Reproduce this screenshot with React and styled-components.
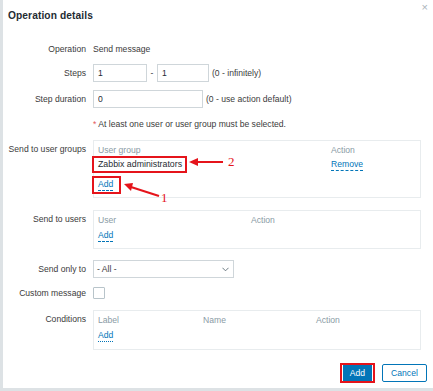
import React from 'react';
import styled, { createGlobalStyle } from 'styled-components';

const Global = createGlobalStyle`
	html, body {
		margin: 0;
		padding: 0;
		background: #ffffff;
	}
	body {
		font-family: 'Liberation Sans', Arial, sans-serif;
	}
`;

export default function App() {
	return (
		<>
			<Global />
			<Dialog>
				<Header>
					<Title>Operation details</Title>
					<Close>×</Close>
				</Header>
				<Form>
					<Row $mt={10}>
						<Label>Operation</Label>
						<Value>Send message</Value>
					</Row>
					<Row $mt={6}>
						<Label>Steps</Label>
						<Value>
							<Input $w={54} defaultValue="1" />
							<Dash>-</Dash>
							<Input $w={52} defaultValue="1" />
							<Hint>(0 - infinitely)</Hint>
						</Value>
					</Row>
					<Row $mt={8}>
						<Label>Step duration</Label>
						<Value>
							<Input $w={110} defaultValue="0" />
							<Hint>(0 - use action default)</Hint>
						</Value>
					</Row>
					<Row $mt={8}>
						<Label />
						<Warning>
							<Star>*</Star> At least one user or user group must be selected.
						</Warning>
					</Row>
					<Row $mt={8}>
						<Label $top>Send to user groups</Label>
						<TableBox $h={58}>
							<TableRow $cols="233px 1fr">
								<Th>User group</Th>
								<Th>Action</Th>
							</TableRow>
							<TableRow $cols="233px 1fr" $h={17}>
								<div>
									<Marked>Zabbix administrators</Marked>
								</div>
								<Link>Remove</Link>
							</TableRow>
							<AddRow>
								<MarkedAdd>
									<Link>Add</Link>
								</MarkedAdd>
							</AddRow>
						</TableBox>
					</Row>
					<Row $mt={12}>
						<Label $top>Send to users</Label>
						<TableBox $h={39}>
							<TableRow $cols="153px 1fr">
								<Th>User</Th>
								<Th>Action</Th>
							</TableRow>
							<PlainAdd>
								<Link>Add</Link>
							</PlainAdd>
						</TableBox>
					</Row>
					<Row $mt={11}>
						<Label>Send only to</Label>
						<Select>
							<span>- All -</span>
							<Chevron viewBox="0 0 8 5">
								<path d="M0.5 0.5 L4 4 L7.5 0.5" />
							</Chevron>
						</Select>
					</Row>
					<Row $mt={9}>
						<Label>Custom message</Label>
						<Checkbox />
					</Row>
					<Row $mt={11}>
						<Label $top>Conditions</Label>
						<TableBox $h={40}>
							<TableRow $cols="105px 113px 1fr">
								<Th>Label</Th>
								<Th>Name</Th>
								<Th>Action</Th>
							</TableRow>
							<PlainAdd>
								<Link $dotted>Add</Link>
							</PlainAdd>
						</TableBox>
					</Row>
				</Form>
				<Footer>
					<MarkedButton>
						<PrimaryButton>Add</PrimaryButton>
					</MarkedButton>
					<SecondaryButton>Cancel</SecondaryButton>
				</Footer>
				<Arrows width="433" height="391" viewBox="0 0 433 391">
					<g stroke="#e5141b" strokeWidth="2" fill="#e5141b">
						<line x1="223" y1="162" x2="196" y2="162" />
						<polygon points="189,162 198,158 198,166" stroke="none" />
						<line x1="159" y1="196" x2="131" y2="187" />
						<polygon points="124,184 133,183 131,191" stroke="none" />
					</g>
					<AnnotationNumber x="228" y="166">2</AnnotationNumber>
					<AnnotationNumber x="161" y="202">1</AnnotationNumber>
				</Arrows>
			</Dialog>
		</>
	);
}

const Dialog = styled.div`
	position: relative;
	width: 433px;
	height: 391px;
	box-sizing: border-box;
	border-left: 3px solid #dde2e5;
	border-bottom: 3px solid #dde2e5;
	background: #ffffff;
	color: #1f2c33;
	font-size: 8.6px;
	overflow: hidden;
`;

const Header = styled.div`
	position: relative;
	height: 30px;
	display: flex;
	align-items: center;
	padding-left: 5px;
`;

const Title = styled.h4`
	margin: 0;
	font-size: 10.2px;
	font-weight: bold;
	color: #1f2c33;
	letter-spacing: 0.1px;
`;

const Close = styled.span`
	position: absolute;
	top: 1px;
	right: 5px;
	font-size: 11px;
	color: #aab4ba;
`;

const Form = styled.div`
	display: flex;
	flex-direction: column;
`;

const Row = styled.div`
	display: grid;
	grid-template-columns: 83px 328px;
	column-gap: 7px;
	margin-top: ${(p) => p.$mt}px;
	align-items: center;
`;

const Label = styled.div`
	text-align: right;
	color: #3b3b3b;
	align-self: ${(p) => (p.$top ? 'start' : 'center')};
	padding-top: ${(p) => (p.$top ? '3px' : '0')};
	line-height: 12px;
	white-space: nowrap;
`;

const Value = styled.div`
	display: flex;
	align-items: center;
	min-height: 18px;
	color: #3b3b3b;
`;

const Input = styled.input`
	width: ${(p) => p.$w}px;
	height: 18px;
	box-sizing: border-box;
	border: 1px solid #cfd6da;
	padding: 0 4px;
	font-family: inherit;
	font-size: 8.6px;
	color: #1f2c33;
	outline: none;
	margin: 0;
`;

const Dash = styled.span`
	width: 10px;
	text-align: center;
	color: #3b3b3b;
`;

const Hint = styled.span`
	margin-left: 3px;
	color: #3b3b3b;
	white-space: nowrap;
`;

const Warning = styled.div`
	line-height: 16px;
	color: #3b3b3b;
`;

const Star = styled.span`
	color: #e45959;
`;

const TableBox = styled.div`
	height: ${(p) => p.$h}px;
	box-sizing: border-box;
	border: 1px solid #e8ecee;
	padding: 3px 4px 0;
	display: flex;
	flex-direction: column;
`;

const TableRow = styled.div`
	display: grid;
	grid-template-columns: ${(p) => p.$cols};
	justify-items: start;
	align-items: center;
	height: ${(p) => (p.$h ? p.$h : 12)}px;
`;

const Th = styled.div`
	color: #8a9ba5;
	line-height: 12px;
`;

const Marked = styled.span`
	display: inline-block;
	margin-left: -6px;
	padding: 0 3px 0 4px;
	border: 2px solid #e5141b;
	line-height: 13px;
	color: #1f2c33;
	font-size: 8.8px;
`;

const AddRow = styled.div`
	margin-top: 3px;
`;

const MarkedAdd = styled.span`
	display: inline-flex;
	align-items: center;
	height: 18px;
	box-sizing: border-box;
	margin-left: -6px;
	padding: 0 6px 0 4px;
	border: 2px solid #e5141b;
`;

const PlainAdd = styled.div`
	margin-top: 3px;
	line-height: 12px;
`;

const Link = styled.span`
	color: #0275b8;
	border-bottom: 1px ${(p) => (p.$dotted ? 'dotted' : 'dashed')} #0275b8;
	line-height: 11px;
	display: inline-block;
`;

const Select = styled.div`
	width: 141px;
	height: 18px;
	box-sizing: border-box;
	border: 1px solid #cfd6da;
	display: flex;
	align-items: center;
	justify-content: space-between;
	padding: 0 4px 0 3px;
	color: #3b3b3b;
`;

const Chevron = styled.svg`
	width: 7px;
	height: 5px;
	fill: none;
	stroke: #5a6a73;
	stroke-width: 1;
`;

const Checkbox = styled.span`
	display: block;
	width: 12px;
	height: 12px;
	box-sizing: border-box;
	border: 1px solid #b8c4ca;
	border-radius: 1px;
`;

const Footer = styled.div`
	display: flex;
	justify-content: flex-end;
	align-items: center;
	gap: 7px;
	margin-top: 13px;
	padding-right: 6px;
`;

const MarkedButton = styled.div`
	border: 2px solid #e5141b;
	height: 20px;
	box-sizing: border-box;
	display: flex;
	padding: 0 1px;
	align-items: stretch;
`;

const PrimaryButton = styled.button`
	width: 29px;
	border: none;
	margin: 0;
	padding: 0;
	background: #0275b8;
	color: #ffffff;
	font-family: inherit;
	font-size: 8.6px;
`;

const SecondaryButton = styled.button`
	width: 45px;
	height: 18px;
	margin: 0;
	padding: 0;
	border: 1px solid #0275b8;
	border-radius: 2px;
	background: #ffffff;
	color: #0275b8;
	font-family: inherit;
	font-size: 8.6px;
`;

const Arrows = styled.svg`
	position: absolute;
	left: -3px;
	top: 0;
	pointer-events: none;
`;

const AnnotationNumber = styled.text`
	font-family: 'Liberation Serif', 'Times New Roman', serif;
	font-size: 13px;
	fill: #e5141b;
`;
